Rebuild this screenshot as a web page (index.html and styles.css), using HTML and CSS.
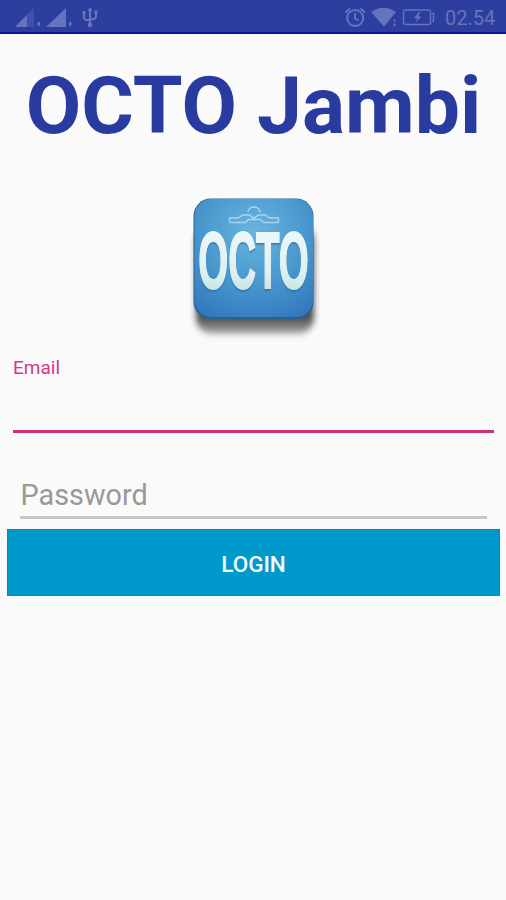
FILE: index.html
```
<!DOCTYPE html>
<html lang="en">
<head>
    <meta charset="UTF-8">
    <meta name="viewport" content="width=device-width, initial-scale=1.0">
    <title>OCTO Jambi</title>
    <link rel="stylesheet" href="styles.css">
</head>
<body>
    <div class="status-bar">
        <!-- Signal and USB icons -->
        <svg class="status-left" width="100" height="34" viewBox="0 0 100 34">
            <path class="dim" d="M15 27L34 8V27Z" />
            <path d="M15 27L27 15V27Z" />
            <path d="M37.5 22h2.500v3l-2 2v-2h-.5z" />
            <path d="M46 27L66 8V27Z" />
            <path d="M69 22h2.500v3l-2 2v-2h-.5z" />
            <g class="line">
                <path d="M90 9V26M84 12v5q0 3 3 3h3M96 12v4q0 3-3 3h-3" />
            </g>
            <path d="M90 7l2.500 4h-5zM82.500 11h3v3h-3zM94.500 10.500h3v3h-3z" />
            <circle cx="90" cy="25" r="2.300" />
        </svg>
        <!-- Alarm, wifi and battery icons -->
        <svg class="status-right" width="96" height="34" viewBox="340 0 96 34">
            <g class="line">
                <circle cx="355.200" cy="18" r="8" />
                <path d="M355 13v5.500l3.500 2M345.500 12.500l4.500-4M365 12.500l-4.500-4" />
            </g>
            <path d="M371 12Q383.500 3.500 396 12L384 26.500Z" />
            <path d="M393.500 19.500h2v2h-2zM393.500 23.500h2v2.500h-2z" />
            <g class="line thin">
                <rect x="403.500" y="10" width="27" height="14.500" rx="2" />
                <path d="M432 13.500h1.500v7.500h-1.500" />
            </g>
            <path d="M419 12l-5 6h3.500l-2 4.500 6-6h-3.500l2.500-4.500z" />
        </svg>
        <span class="clock">02.54</span>
    </div>

    <div class="login">
        <h1>OCTO Jambi</h1>

        <svg class="logo" width="150" height="160" viewBox="180 185 150 160">
            <defs>
                <radialGradient id="face" cx=".5" cy=".28" r=".8">
                    <stop offset="0" stop-color="#69b5de" />
                    <stop offset=".5" stop-color="#4c9bd0" />
                    <stop offset="1" stop-color="#3279be" />
                </radialGradient>
                <linearGradient id="letters" x1="0" y1="0" x2="0" y2="1">
                    <stop offset="0" stop-color="#f2fafa" />
                    <stop offset=".65" stop-color="#def0f2" />
                    <stop offset="1" stop-color="#b4dcd6" />
                </linearGradient>
                <linearGradient id="under" x1="0" y1="0" x2="0" y2="1">
                    <stop offset=".85" stop-color="#222" />
                    <stop offset="1" stop-color="#999" />
                </linearGradient>
                <filter id="blur" x="-20%" y="-20%" width="140%" height="140%">
                    <feGaussianBlur stdDeviation="3" />
                </filter>
            </defs>
            <rect x="196" y="225" width="118" height="109" rx="16" fill="url(#under)" opacity=".8" filter="url(#blur)" />
            <rect x="193.500" y="198.500" width="120" height="120.500" rx="17.500" fill="#29628f" />
            <rect x="194.500" y="199" width="118.500" height="118" rx="17" fill="url(#face)" />
            <g class="crest">
                <path d="M229.500 222v-4h9l4-3h7l4 3M278.500 222v-4h-9l-4-3h-7l-4 3M229.500 222.500h16l3-3h12l3 3h15" />
                <path d="M248 212q1-5 6-5t6 5M251 216l3 2.500 3-2.500" />
            </g>
            <!-- Squeezed to fit the width of the tile -->
            <g transform="translate(198.200 287.500) scale(.488 1)">
                <text class="logo-text" x="0" y="0">OCTO</text>
            </g>
        </svg>

        <label class="email-label" for="email">Email</label>
        <input type="text" id="email" class="email-field">
        <input type="password" class="password-field" placeholder="Password">
        <button class="login-button">LOGIN</button>
    </div>
</body>
</html>
```
FILE: styles.css
```
body {
    margin: 0;
    min-height: 900px;
    background-color: #fafafa;
    font-family: Roboto, sans-serif;
    overflow: hidden;
}

/* Status Bar */
.status-bar {
    height: 34px;
    box-sizing: border-box;
    border-bottom: 2px solid #10149a;
    background-color: #2d3e9f;
    display: flex;
    align-items: flex-start;
}

.status-bar svg {
    fill: #6673bd;
    flex: none;
}

.status-bar .dim {
    fill: #4150aa;
}

.status-bar .line {
    fill: none;
    stroke: #6673bd;
    stroke-width: 2;
}

.status-bar .thin {
    stroke-width: 1.5;
}

.status-right {
    margin-left: auto;
}

.clock {
    width: 61px;
    margin: 0 0 0 9px;
    font-size: 20px;
    line-height: 37px;
    color: #6673bd;
}

/* Login Form */
.login {
    display: flex;
    flex-direction: column;
    padding: 0 6px 0 7px;
}

h1 {
    margin: 25px 0 0;
    font-size: 80.5px;
    line-height: 94px;
    font-weight: 700;
    text-align: center;
    white-space: nowrap;
    color: #2a3b9f;
}

.logo {
    margin: 32px auto 0 173px;
    overflow: visible;
}

.crest {
    fill: none;
    stroke: #a5d7ee;
    stroke-width: 1.3;
}

.logo-text {
    font-family: "Liberation Sans", sans-serif;
    font-size: 79px;
    font-weight: 700;
    fill: url(#letters);
    stroke: url(#letters);
    stroke-width: 2;
    filter: drop-shadow(0 1px 1px #2c6595);
}

.email-label {
    margin: 12px 0 0 6px;
    font-size: 19px;
    line-height: 22px;
    color: #d43a80;
}

input {
    box-sizing: border-box;
    padding: 0;
    border: none;
    outline: none;
    border-radius: 0;
    background: transparent;
    font-family: inherit;
    font-size: 28.8px;
}

.email-field {
    height: 54px;
    margin: 0 6px;
    border-bottom: 3px solid #d03078;
}

.password-field {
    height: 48px;
    margin: 38px 13px 0;
    padding: 2px 0 0 0.5px;
    border-bottom: 3px solid #c8c8c8;
}

.password-field::placeholder {
    color: #999;
    opacity: 1;
}

.login-button {
    height: 67px;
    margin: 10px 0 0;
    padding: 2px 0 0;
    border: 1px solid #058abb;
    background-color: #0099cc;
    color: #f2fafd;
    font-family: inherit;
    font-size: 22.5px;
    font-weight: 500;
}
```
